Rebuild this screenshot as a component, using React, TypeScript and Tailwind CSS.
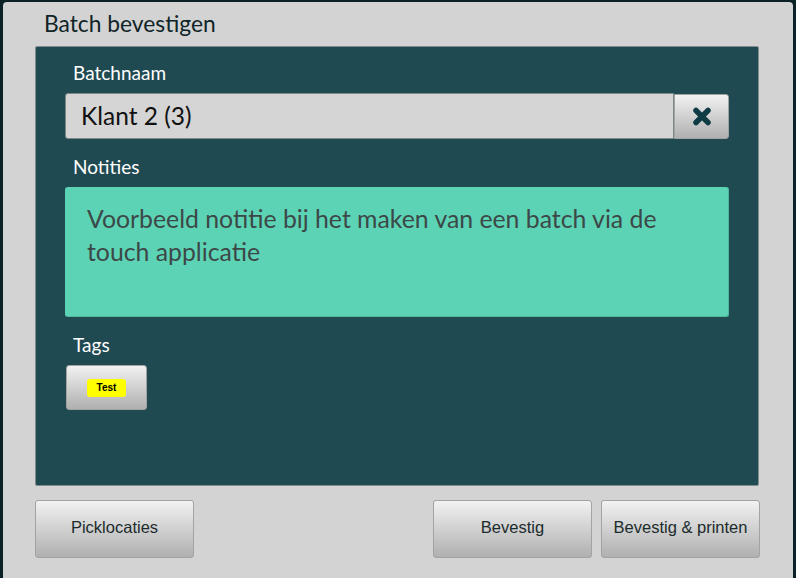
import React from "react";

const btn =
  "rounded-[3px] border border-[#a3a3a3] bg-gradient-to-b from-[#f2f2f2] to-[#b0b0b0] text-[#1c2b2c] font-['Liberation_Sans',Arial,sans-serif] text-[16.5px]";

function ActionButton({ label }: { label: string }) {
  return (
    <button className={`${btn} w-[159px] h-[58px] flex items-center justify-center pb-[3px]`}>
      {label}
    </button>
  );
}

export default function App() {
  return (
    <div className="w-[796px] h-[578px] bg-[#0c2125] pt-[2px] pl-[3px] pr-[3px] overflow-hidden">
      <div className="h-full bg-[#d3d3d3] rounded-tl-[4px] rounded-tr-[4px] flex flex-col font-['Lato','Open_Sans',sans-serif]">
        <h1 className="pl-[41px] pt-[6px] h-[44px] text-[22.8px] leading-[30px] text-[#0f2427]">
          Batch bevestigen
        </h1>

        <div className="mx-[32px] mr-[34px] h-[440px] bg-[#204a52] border border-[#7f8d8f] rounded-[2px] px-[29px] pt-[14px]">
          <div className="pl-[8px] text-[19px] leading-[24px] text-white">Batchnaam</div>

          <div className="mt-[8px] flex h-[46px]">
            <div className="flex-1 bg-[#d5d5d5] border border-[#7d8889] rounded-l-[3px] flex items-center pl-[15px] text-[24.5px] text-[#111]">
              Klant 2 (3)
            </div>
            <button className="w-[55px] h-[45px] mt-[1px] rounded-r-[3px] border border-[#a3a3a3] bg-gradient-to-b from-[#f2f2f2] to-[#b0b0b0] flex items-center justify-center">
              <svg width="20" height="19" viewBox="0 0 20 19">
                <path d="M4 3.5 L16 15.5 M16 3.5 L4 15.5" stroke="#0f3b45" strokeWidth="5.5" strokeLinecap="round" />
              </svg>
            </button>
          </div>

          <div className="mt-[16px] pl-[8px] text-[19px] leading-[24px] text-white">Notities</div>

          <div className="mt-[8px] h-[130px] bg-[#5dd3b5] rounded-[3px] border-b border-r border-[#4fb89f] px-[22px] pt-[15px] text-[24.8px] leading-[33px] text-[#3c4847]">
            Voorbeeld notitie bij het maken van een batch via de touch applicatie
          </div>

          <div className="mt-[16px] pl-[8px] text-[19px] leading-[24px] text-white">Tags</div>

          <button className="mt-[8px] ml-[1px] w-[81px] h-[45px] rounded-[3px] border border-[#a3a3a3] bg-gradient-to-b from-[#f2f2f2] to-[#b0b0b0] flex items-center justify-center">
            <span className="bg-[#ffff00] rounded-[3px] w-[39px] h-[18px] flex items-center justify-center text-[10px] font-bold text-black font-['Liberation_Sans',Arial,sans-serif]">
              Test
            </span>
          </button>
        </div>

        <div className="mt-[14px] pl-[32px] pr-[33px] flex">
          <ActionButton label="Picklocaties" />
          <div className="flex-1" />
          <div className="flex gap-[9px]">
            <ActionButton label="Bevestig" />
            <ActionButton label="Bevestig & printen" />
          </div>
        </div>
      </div>
    </div>
  );
}
